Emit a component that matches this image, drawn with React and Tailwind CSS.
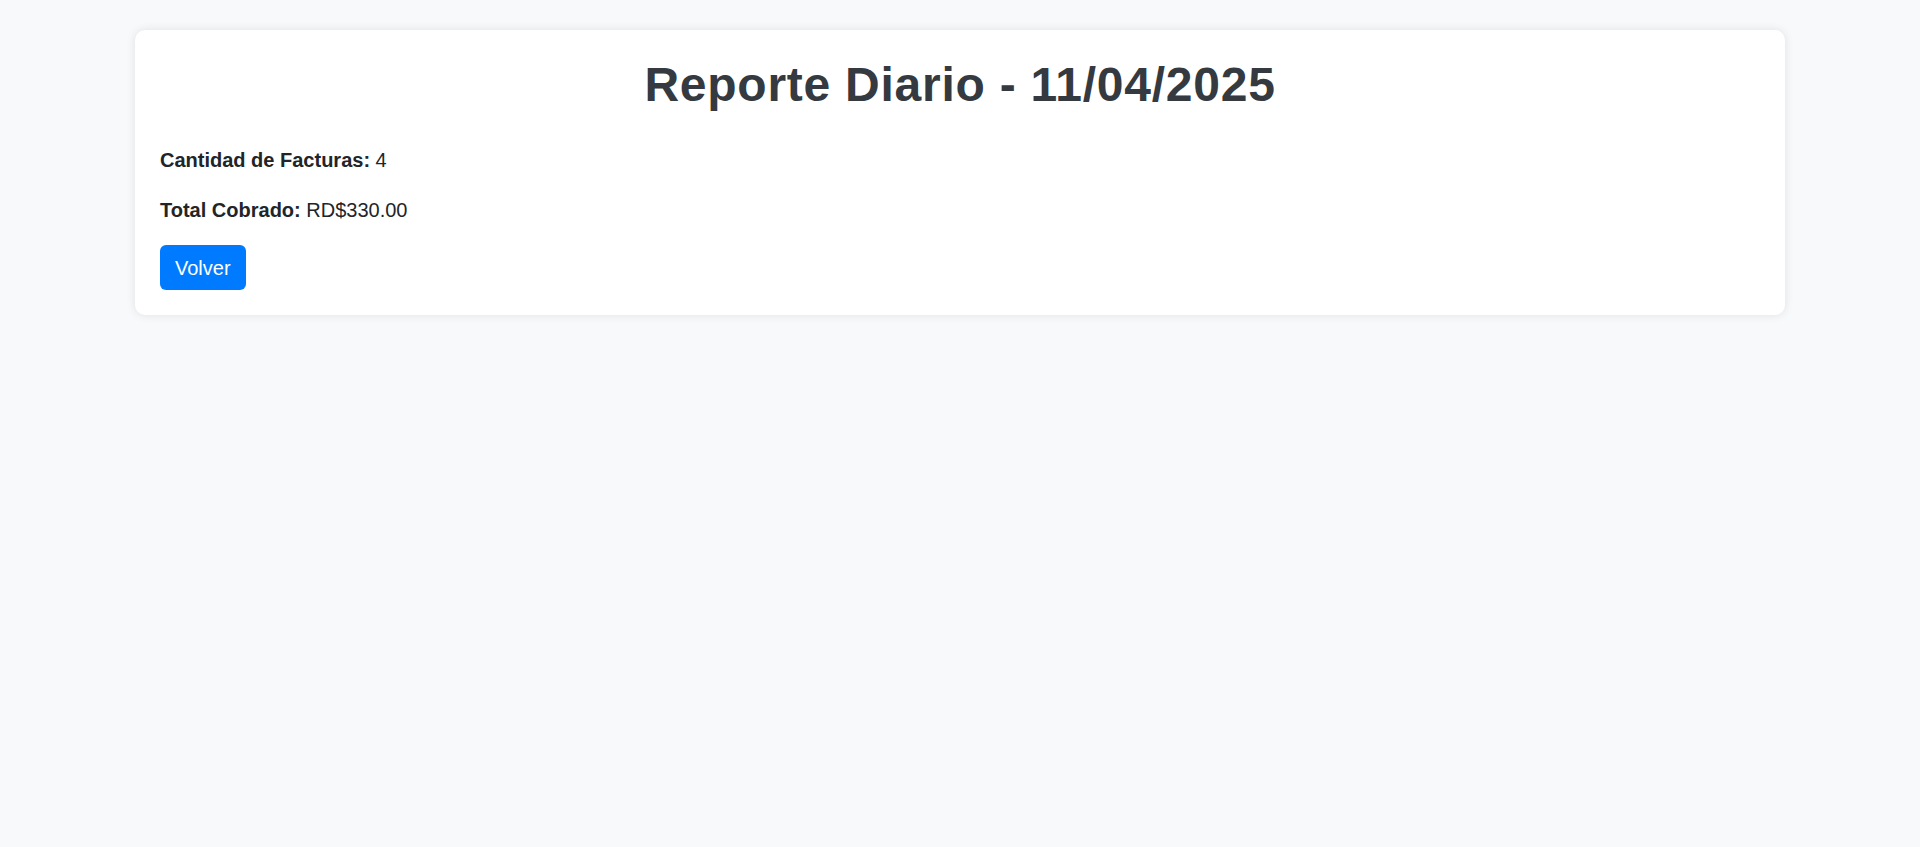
export default function App() {
  return (
    <div className="min-h-[847px] w-full bg-[#f8f9fa] pt-[30px]" style={{ fontFamily: '"Liberation Sans", Arial, sans-serif' }}>
      <div className="mx-auto w-[1650px] rounded-[10px] bg-white p-[25px] shadow-[0_0_10px_rgba(0,0,0,0.1)]">
        <h1 className="mb-[30px] text-center text-[48px] font-bold leading-[60px] tracking-[0.75px] text-[#343a40]">
          Reporte Diario - 11/04/2025
        </h1>
        <p className="mb-[20px] text-[20px] leading-[30px] text-[#212529]">
          <strong className="font-bold">Cantidad de Facturas:</strong> 4
        </p>
        <p className="mb-[20px] text-[20px] leading-[30px] text-[#212529]">
          <strong className="font-bold">Total Cobrado:</strong> RD$330.00
        </p>
        <button className="flex h-[45px] items-center rounded-[6px] bg-[#007bff] px-[15px] text-[20px] leading-[24px] text-white">
          Volver
        </button>
      </div>
    </div>
  );
}
